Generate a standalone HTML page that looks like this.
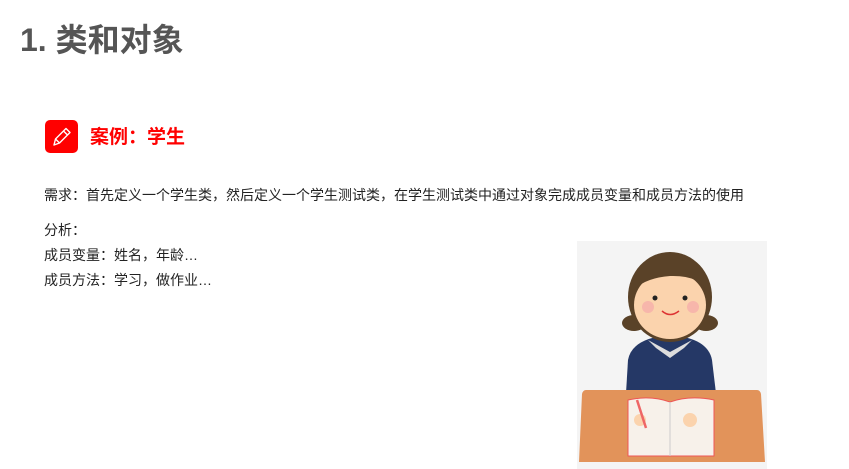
<!DOCTYPE html>
<html><head><meta charset="utf-8"><style>
body{margin:0;width:849px;height:469px;background:#fff;position:relative;overflow:hidden;font-family:"Liberation Sans","Noto Sans CJK SC",sans-serif}
.a{position:absolute;white-space:nowrap}
h1{position:absolute;left:20px;top:18px;margin:0;font-size:32px;font-weight:bold;color:#555;line-height:44px}
.t{font-size:14px;color:#222;line-height:18px}
</style></head><body>
<h1>1. 类和对象</h1>
<div class="a" style="left:45px;top:120px;width:33px;height:33px;background:#f00;border-radius:5px">
<svg width="33" height="33" viewBox="0 0 33 33"><g fill="none" stroke="#fff" stroke-width="1.4" stroke-linejoin="round"><path d="M9 25 L10.5 19 L21 8.5 L25 12.5 L14.5 23 Z"/><path d="M18.5 11 L22.5 15"/><path d="M10.5 19 L14.5 23"/></g></svg></div>
<div class="a" style="left:90px;top:126px;font-size:19px;font-weight:bold;color:#f00;line-height:24px">案例：学生</div>
<div class="a t" style="left:44px;top:186px">需求：首先定义一个学生类，然后定义一个学生测试类，在学生测试类中通过对象完成成员变量和成员方法的使用</div>
<div class="a t" style="left:44px;top:221px">分析：</div>
<div class="a t" style="left:44px;top:246px">成员变量：姓名，年龄…</div>
<div class="a t" style="left:44px;top:271px">成员方法：学习，做作业…</div>
<svg class="a" style="left:577px;top:241px" width="190" height="228" viewBox="577 241 190 228">
<rect x="577" y="241" width="190" height="228" fill="#f4f4f4"/>
<ellipse cx="634" cy="323" rx="12" ry="8" fill="#5a4228"/>
<ellipse cx="706" cy="323" rx="12" ry="8" fill="#5a4228"/>
<path d="M625 410 L628 360 Q632 338 670 335 Q708 338 712 360 L718 410 Z" fill="#253866"/>
<path d="M648 340 L670 352 L692 340 L684 348 L670 358 L656 348 Z" fill="#ddd"/>
<ellipse cx="670" cy="297" rx="42" ry="45" fill="#5a4228"/>
<ellipse cx="670" cy="305" rx="36" ry="34" fill="#fbd3ad"/>
<path d="M634 290 Q650 265 680 268 Q700 272 706 292 Q700 275 670 276 Q645 278 634 290Z" fill="#5a4228"/>
<circle cx="655" cy="298" r="2.5" fill="#222"/><circle cx="685" cy="298" r="2.5" fill="#222"/>
<circle cx="648" cy="307" r="6" fill="#f5a9a9" opacity=".7"/><circle cx="693" cy="307" r="6" fill="#f5a9a9" opacity=".7"/>
<path d="M662 311 Q670 318 679 311" stroke="#d33" stroke-width="1.5" fill="none"/>
<path d="M583 390 L757 390 Q760 390 761 394 L765 462 L579 462 L582 394 Q583 390 586 390Z" fill="#e2935a"/>
<path d="M628 400 Q650 395 670 402 Q690 395 714 400 L714 456 L628 456 Z" fill="#f7f1ea" stroke="#e55" stroke-width="1"/>
<line x1="670" y1="402" x2="670" y2="456" stroke="#ccc"/>
<circle cx="640" cy="420" r="6" fill="#fbd3ad"/><circle cx="690" cy="420" r="7" fill="#fbd3ad"/>
<line x1="637" y1="400" x2="646" y2="428" stroke="#e66" stroke-width="2.5"/>
</svg>
</body></html>
